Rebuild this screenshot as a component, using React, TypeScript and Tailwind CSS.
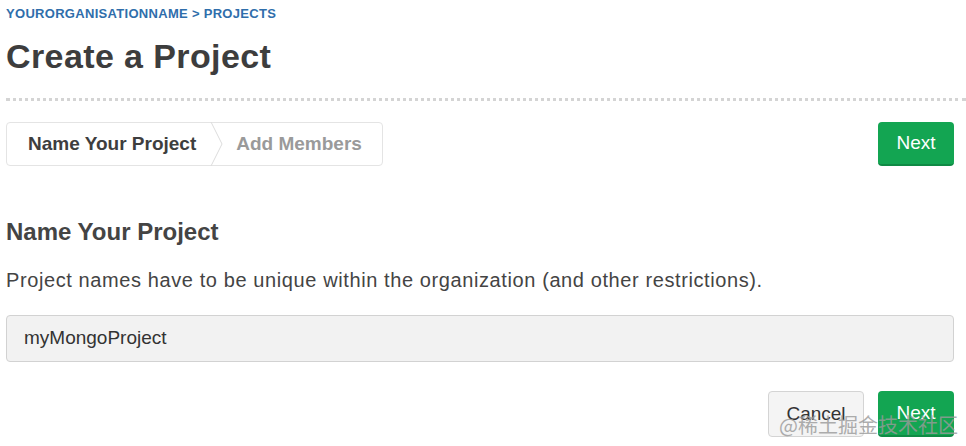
import React from "react";

export default function App() {
  return (
    <div
      className="w-[966px] h-[446px] bg-white overflow-hidden relative px-[6px] pt-[6px]"
      style={{ fontFamily: '"Liberation Sans", Arial, sans-serif' }}
    >
      <div className="text-[13px] font-bold text-[#2f6eab] tracking-[0.3px] leading-[16px]">
        YOURORGANISATIONNAME &gt; PROJECTS
      </div>
      <h1 className="mt-[14px] text-[34px] font-bold text-[#3d3d3d] leading-[40px] tracking-[0.4px]">
        Create a Project
      </h1>
      <div className="mt-[22px] h-[4px] w-[960px] border-t-[3px] border-dotted border-[#d4d4d4]" />

      <div className="mt-[20px] flex items-center justify-between w-[948px]">
        <div className="flex h-[44px] w-[377px] rounded-[4px] border border-[#e4e4e4] items-center relative">
          <div className="pl-[21px] pr-[14px] text-[19px] font-bold text-[#3e3e3e]">Name Your Project</div>
          <svg width="14" height="44" viewBox="0 0 14 44" className="shrink-0">
            <path d="M1 0 L12 22 L1 44" fill="none" stroke="#dcdcdc" strokeWidth="1" />
          </svg>
          <div className="pl-[12px] text-[19px] font-bold text-[#9a9a9a]">Add Members</div>
        </div>
        <button className="h-[44px] w-[76px] rounded-[4px] bg-[#13a552] text-white text-[19px] border-b-2 border-[#0f8a44]">
          Next
        </button>
      </div>

      <h2 className="mt-[51px] text-[24px] font-bold text-[#444] leading-[30px]">Name Your Project</h2>
      <p className="mt-[21px] text-[20px] text-[#444] leading-[24px] tracking-[0.6px]">
        Project names have to be unique within the organization (and other restrictions).
      </p>
      <div className="mt-[23px] w-[948px] h-[47px] rounded-[4px] border border-[#d2d2d2] bg-[#f2f2f2] flex items-center pl-[17px] text-[19px] text-[#333]">
        myMongoProject
      </div>

      <div className="mt-[29px] flex justify-end gap-[14px] w-[948px]">
        <button className="h-[46px] w-[96px] rounded-[4px] border border-[#d4d4d4] bg-[#f4f4f4] text-[19px] text-[#333]">
          Cancel
        </button>
        <button className="h-[46px] w-[76px] rounded-[4px] bg-[#13a552] text-white text-[19px] border-b-2 border-[#0f8a44]">
          Next
        </button>
      </div>

      <div
        className="absolute right-[8px] bottom-[6px] text-[20px] text-[#9a9a9a] opacity-80"
        style={{ fontFamily: '"Noto Sans CJK SC", sans-serif' }}
      >
        @稀土掘金技术社区
      </div>
    </div>
  );
}
